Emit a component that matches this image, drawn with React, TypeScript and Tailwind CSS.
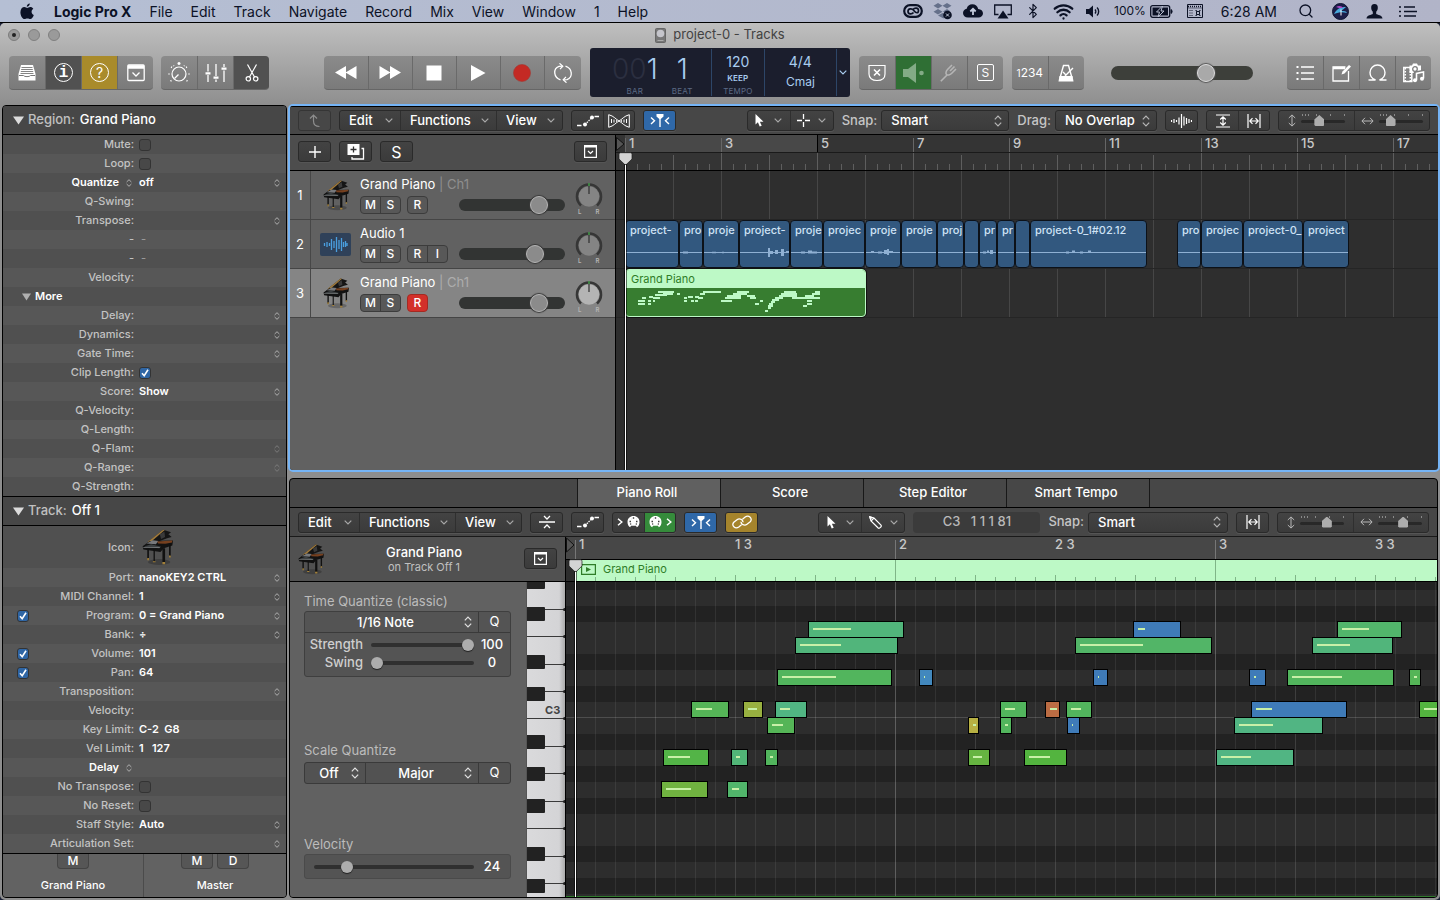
import React from "react";
import { Wifi, Bluetooth, Search } from "lucide-react";

type Kids = { children?: React.ReactNode };

/* ---------- shared class strings ---------- */
const darkBox = "rounded-[3px] border border-[#2a2a2a] bg-linear-to-b from-[#434343] to-[#3b3b3b] shadow-[0_1px_0_#555]";
const cell = "flex items-center justify-center";
const range = "m-0 block appearance-none bg-transparent [&::-webkit-slider-thumb]:appearance-none [&::-webkit-slider-runnable-track]:rounded-full";
const fader =
  range +
  " h-[18px] w-[106px] [&::-webkit-slider-runnable-track]:h-3 [&::-webkit-slider-runnable-track]:bg-[#323433] [&::-webkit-slider-thumb]:-mt-[3px] [&::-webkit-slider-thumb]:size-[18px] [&::-webkit-slider-thumb]:rounded-full [&::-webkit-slider-thumb]:border [&::-webkit-slider-thumb]:border-[#b5b5b5] [&::-webkit-slider-thumb]:bg-[#8b8b8b] [&::-webkit-slider-thumb]:shadow-[0_0_1px_1px_#3a3a3a]";
const master =
  range +
  " h-[18px] w-[142px] [&::-webkit-slider-runnable-track]:h-[14px] [&::-webkit-slider-runnable-track]:bg-[#3d3f3a] [&::-webkit-slider-thumb]:-mt-[2px] [&::-webkit-slider-thumb]:size-[18px] [&::-webkit-slider-thumb]:rounded-full [&::-webkit-slider-thumb]:border [&::-webkit-slider-thumb]:border-[#dedede] [&::-webkit-slider-thumb]:bg-[#a9a9a9] [&::-webkit-slider-thumb]:shadow-[0_0_1px_1px_#555]";
const mini =
  range +
  " h-[14px] [&::-webkit-slider-runnable-track]:h-1 [&::-webkit-slider-runnable-track]:bg-[#303030] [&::-webkit-slider-thumb]:-mt-1 [&::-webkit-slider-thumb]:size-3 [&::-webkit-slider-thumb]:rounded-full [&::-webkit-slider-thumb]:bg-[#adadad] [&::-webkit-slider-thumb]:shadow-[0_1px_1px_#222]";
const zoomer =
  range +
  " h-[11px] w-11 [&::-webkit-slider-runnable-track]:h-[3px] [&::-webkit-slider-runnable-track]:bg-[#282828] [&::-webkit-slider-thumb]:-mt-[5px] [&::-webkit-slider-thumb]:h-[11px] [&::-webkit-slider-thumb]:w-[10px] [&::-webkit-slider-thumb]:bg-[#adadad] [&::-webkit-slider-thumb]:[clip-path:polygon(50%_0,100%_42%,100%_90%,90%_100%,10%_100%,0_90%,0_42%)]";

/* ---------- icons ---------- */
type SvgProps = { w: number; h: number; children: React.ReactNode; className?: string; sw?: number; vb?: string };
const Svg = ({ w, h, children, className, sw = 1, vb }: SvgProps) => (
  <svg width={w} height={h} viewBox={vb ?? `0 0 ${w} ${h}`} fill="none" stroke="currentColor" strokeWidth={sw} className={"shrink-0 " + (className ?? "")} aria-hidden="true">
    {children}
  </svg>
);
const Chevron = ({ className = "text-[#a8a8a8]" }: { className?: string }) => (
  <Svg w={8} h={5} sw={1.2} className={className}><path d="M.7.7 4 4 7.3.7" /></Svg>
);
const UpDown = ({ className = "text-[#b5b5b5]" }: { className?: string }) => (
  <Svg w={8} h={12} sw={1.2} className={className}><path d="M.8 4.3 4 1l3.2 3.3M.8 7.7 4 11l3.2-3.3" /></Svg>
);
const SmallUpDown = ({ dim }: { dim?: boolean }) => (
  <Svg w={6} h={8} sw={1} className={dim ? "text-[#7c7c7c]" : "text-[#b0b0b0]"}><path d="M.6 3 3 .7 5.4 3M.6 5 3 7.3 5.4 5" /></Svg>
);
const Triangle = ({ className }: { className?: string }) => (
  <Svg w={11} h={9} className={className}><path d="M0 .5h11L5.500 8.500z" fill="currentColor" stroke="none" /></Svg>
);
const Flex = () => (
  <Svg w={20} h={13} sw={1.4}><path d="M1 3.500 4.500 6.800 1 10M19 3.500 15.500 6.800 19 10" /><path d="M6.500 0h7v2.500L10.700 5v8H9.300V5L6.500 2.500z" fill="currentColor" stroke="none" /></Svg>
);
const Automation = () => (
  <Svg w={22} h={12} sw={1.3}><path d="M0 10.500h4.500M17.500 1.500H22" /><path d="m8 9.500 7-7" strokeDasharray="1.500 1" /><circle cx="8" cy="9.500" r="2" fill="currentColor" stroke="none" /><circle cx="15" cy="2.500" r="2" fill="currentColor" stroke="none" /></Svg>
);
const Arrow = () => (
  <Svg w={9} h={13}><path d="M.5 0v10.500l2.400-2.200 1.800 4.300 2-.9-1.800-4H8.500z" fill="currentColor" stroke="none" /></Svg>
);
const Inspector = () => (
  <Svg w={13} h={13} sw={1.2}><path d="M.6.6h11.800v11.800H.6z" /><path d="M.6 1.500h11.800" strokeWidth="2" /><path d="m4 6 2.500 2.500L9 6" /></Svg>
);
const HFit = () => (
  <Svg w={14} h={14} sw={1.2}><path d="M1 0v14M13 0v14M3 7h8M5.500 4.200 2.800 7l2.700 2.800M8.500 4.200 11.200 7 8.500 9.800" /></Svg>
);
const VFit = () => (
  <Svg w={14} h={14} sw={1.2}><path d="M0 1h14M0 13h14M7 3v8M4.200 5.500 7 2.800l2.800 2.700M4.200 8.500 7 11.200l2.800-2.700" /></Svg>
);
const Palette = () => (
  <Svg w={13} h={12}><path d="M6.500 0C10 0 12.500 2.500 12.500 6c0 2.500-1 4.500-2.700 5.300L9 9.800H4L3.200 11.300C1.500 10.500.5 8.500.5 6 .5 2.500 3 0 6.500 0z" fill="currentColor" stroke="none" /><path d="M2.500 5.500h1.500M9 5.500h1.500M5.800 2h1.400M4 3h.1M9 3h.1M3.200 8h1M8.800 8h1" stroke="#3d3d3d" strokeWidth="1.300" /></Svg>
);
const Angle = () => <Svg w={6} h={8} sw={1.5}><path d="M1 .8 4.800 4 1 7.200" /></Svg>;

const PianoPic = ({ w, h }: { w: number; h: number }) => (
  <svg width={w} height={h} viewBox="0 0 94 112" className="shrink-0" role="img" aria-label="Grand piano">
    <ellipse cx="52" cy="100" rx="34" ry="9" fill="#000" opacity=".22" />
    <path d="M17 40 64 2l24 8-8 6 10 8-14 4-26 10z" fill="#151515" />
    <path d="M17 39 64 2l5 1-44 38z" fill="#a07a3c" />
    <path d="m54 16 14-8 2 16-12 6z" fill="#3a3a3a" />
    <path d="M2 52 24 36l70-1-2 15-26 8-10 12-52-8z" fill="#121212" />
    <path d="M14 44 32 34l18 2-8 10z" fill="#77797c" />
    <path d="m46 38 46-3-1 6-20 4-22-1z" fill="#76401f" />
    <path d="m8 52 20-6 30 8-6 4-44-4z" fill="#3c4042" />
    <path d="M4 56h50" stroke="#8e9192" strokeWidth="2" />
    <path d="M16 60h5v32h-5zM35 62h4v38h-4zM62 58h8v42h-8zM82 48h5v34h-5z" fill="#111" />
    <path d="M16 88h5v7h-5zM62 100h8v7h-8zM82 80h5v6h-5zM33 98h8v3h-8z" fill="#a38038" />
  </svg>
);
const WavePic = () => (
  <svg width="31" height="23" viewBox="0 0 31 23" className="shrink-0" role="img" aria-label="Audio waveform">
    <rect width="31" height="23" rx="2" fill="#2f4159" />
    <path d="M4.500 10v3M7 9v5M9.500 10v3M11.500 6v11M14 8v7M16.500 4v15M19 7v9M21.500 5v13M23.500 9v5M25.500 8v6M27 10v3" stroke="#4a9fe0" strokeWidth="1.300" />
  </svg>
);

/* ---------- menu bar ---------- */
const menus = ["File", "Edit", "Track", "Navigate", "Record", "Mix", "View", "Window", "1", "Help"];
const Tray = ({ children, wide }: Kids & { wide?: boolean }) => <span className={cell + (wide ? " w-[34px]" : " w-[30px]")}>{children}</span>;

function MenuBar() {
  return (
    <header className="flex h-[23px] items-center border-b border-black bg-linear-to-r from-[#b5bfd4] to-[#b1b4c8] text-[14px] text-[#0c1226]">
      <a href="#apple" aria-label="Apple menu" className="ml-5">
        <Svg w={14} h={17} vb="0 0 14 17"><path d="M9.800.5c.1 1.700-1.400 3.300-3 3.300C6.600 2.200 8.200.6 9.800.5zM7.200 4.900c.8 0 1.600-.8 3.100-.8 1.200 0 2.300.6 3 1.600-2.500 1.600-2.100 5.100.5 6.200-.6 1.900-2 4.200-3.500 4.200-1 0-1.500-.7-2.900-.7s-1.900.7-2.900.7C2.500 16.100.4 12.700.4 9.300c0-3.400 2-5.200 4-5.200 1.300 0 2.100.8 2.800.8z" fill="currentColor" stroke="none" /></Svg>
      </a>
      <nav className="ml-5 flex items-center gap-[18px]">
        <a href="#app" className="font-bold">Logic Pro X</a>
        {menus.map((m) => <a key={m} href={"#" + m}>{m}</a>)}
      </nav>
      <div className="ml-auto flex items-center pr-[15px]">
        <Tray>
          <Svg w={20} h={14} sw={2.200}><rect x="1.200" y="1.200" width="17.600" height="11.600" rx="5.800" /><path d="M10.500 8.500C9 10.500 5 10.500 5 7.500s4-3.500 6-.8 4.500 2.800 4.500-.2-4-3-5.500-1" strokeWidth="1.700" /></Svg>
        </Tray>
        <Tray>
          <Svg w={20} h={17}><path d="m5 0 4.500 2.700L5 5.500.5 2.700zM14 0l4.500 2.700L14 5.500 9.500 2.700zM5 6l4.500 2.700L5 11.500.5 8.700zM9.500 10l3 2-2 3.500L5 12.500zM14 6l3 2-5 1.500-2-1z" fill="#65708a" stroke="none" /><circle cx="14.500" cy="12" r="4.300" fill="currentColor" stroke="none" /><path d="m13 10.500 3 3m0-3-3 3" stroke="#c8d0e0" /></Svg>
        </Tray>
        <Tray>
          <Svg w={20} h={14}><path d="M5 13.500C2 13.500 0 11.500 0 9c0-2.200 1.600-4 3.700-4.300C4.300 2 6.500.3 9.300.3c3 0 5.300 2 5.900 4.700C18 5.100 20 6.900 20 9.300c0 2.400-2 4.200-4.500 4.200z" fill="currentColor" stroke="none" /><path d="M10 11V5M7.300 7.500 10 4.800l2.700 2.700" stroke="#c3cadb" strokeWidth="1.800" /></Svg>
        </Tray>
        <Tray>
          <Svg w={18} h={15} sw={1.3}><path d="M4.500 10.500H.7V1h16.600v9.500h-3.800" /><path d="m9 6.500 5.500 8h-11z" fill="currentColor" stroke="none" /></Svg>
        </Tray>
        <Tray><Bluetooth size={16} strokeWidth={1.8} /></Tray>
        <Tray><Wifi size={21} strokeWidth={2.6} /></Tray>
        <Tray>
          <Svg w={14} h={13} sw={1.4}><path d="M0 4h3l4-3.500v12L3 9H0z" fill="currentColor" stroke="none" /><path d="M9 4.500c1 1 1 3 0 4M11 2.500c2.200 2 2.200 6 0 8" /></Svg>
        </Tray>
        <span className="ml-[6px] text-[12px]">100%</span>
        <Svg w={23} h={13} className="ml-1"><rect x=".7" y=".7" width="19" height="11.600" rx="2" strokeWidth="1.300" /><path d="M21 4.500c1.500.5 1.500 3.500 0 4z" fill="currentColor" /><rect x="2.500" y="2.500" width="15.500" height="8" fill="currentColor" stroke="none" /><path d="m12.500 1-6 6h3L8 12l6-6h-3z" fill="currentColor" stroke="#b8bfd2" /></Svg>
        <Svg w={16} h={14} className="ml-[14px]"><path d="M.5.5h15v13H.5z" /><path d="M1 2.500h14" strokeWidth="1.500" strokeDasharray="1 1" /><path d="M.5 4h15M2.500 6.500h4M2.500 9h4M2.500 11.500h4" strokeDasharray="1 1" /><path d="M9.500 7.500h3v3h-3zM8.500 6.500h1v1M13.500 6.500h-1v1M8.500 11.500h1v-1M13.500 11.500h-1v-1" /></Svg>
        <span className="ml-[18px]">6:28 AM</span>
        <span className="ml-3 flex">
          <Tray wide><Search size={16} strokeWidth={2} /></Tray>
          <Tray wide>
            <Svg w={17} h={17}><circle cx="8.500" cy="8.500" r="8" fill="#1c1d49" stroke="#111633" /><path d="M2 11c3-6 7-7 12-7-2 2-4 3-5 4 3 0 5 0 6 2-4-1-8-1-13 1z" fill="#48a9dc" stroke="none" /><path d="M4 4c3-2 6-1 7 1-3 0-5 0-7-1z" fill="#b04bc4" stroke="none" /><path d="M9 6.500v6" stroke="#fff" /></Svg>
          </Tray>
          <Tray wide>
            <Svg w={17} h={15}><path d="M8.500 0c2.300 0 3.500 1.600 3.300 4-.1 1.700-.8 3-1.600 3.700v2.200c1 .9 6.300 1 6.300 4.600H.5c0-3.600 5.300-3.700 6.300-4.600V7.700C6 7 5.300 5.700 5.200 4 5 1.600 6.200 0 8.500 0z" fill="currentColor" stroke="none" /></Svg>
          </Tray>
          <Tray wide>
            <Svg w={18} h={11} sw={1.700}><path d="M0 1h2M5 1h11M0 5.500h2M5 5.500h13M0 10h2M5 10h12" /></Svg>
          </Tray>
        </span>
      </div>
    </header>
  );
}

/* ---------- control bar ---------- */
type TB = { label: string; icon: React.ReactNode; tone?: string; w?: string };
function Group({ items, className = "" }: { items: TB[]; className?: string }) {
  return (
    <div className={"flex h-[34px] overflow-hidden rounded-[4px] border-b border-[#666] bg-linear-to-b from-[#8b8b8b] to-[#7a7a7a] " + className}>
      {items.map((b, i) => (
        <button key={b.label} aria-label={b.label} className={`${cell} ${b.w ?? "w-9"} text-white ${i ? "border-l border-[#6a6a6a]" : ""} ${b.tone ?? ""}`}>
          {b.icon}
        </button>
      ))}
    </div>
  );
}
const ringed = "flex size-[19px] items-center justify-center rounded-full border border-white leading-none";
const views: TB[] = [
  { label: "Library", icon: <Svg w={18} h={18}><path d="M3 1h12l2.500 9v6.500H.5V10z" fill="currentColor" stroke="none" /><path d="M3.500 3.500h11M3.200 5.500h11.600M2.800 7.500h12.400M2.500 9.500h13" stroke="#777" strokeWidth=".9" /><path d="M1 11.500h4.500c.5 1.500 6.500 1.500 7 0H17" stroke="#777" /></Svg> },
  { label: "Inspector", tone: "bg-[#515151]", icon: <span className={ringed + " [font-family:'Liberation_Mono',monospace] text-[16px] font-bold"}>i</span> },
  { label: "Quick Help", tone: "bg-[#a98b2b]", icon: <span className={ringed + " text-[14px]"}>?</span> },
  { label: "Toolbar", icon: <Svg w={18} h={18} sw={1.300}><rect x=".8" y="1" width="16.400" height="15.500" rx="1" /><path d="M1 3h16" strokeWidth="3.500" /><path d="m5.500 8.500 3.500 3.500 3.500-3.500" /></Svg> },
];
const panels: TB[] = [
  { label: "Smart Controls", icon: <Svg w={22} h={22} sw={1.200}><circle cx="11" cy="12" r="7" /><path d="m6.500 16.500 4-4" /><path d="M11 0v3M9.500 1.500h3M.5 12h1M20.500 12h1M3 5l1 .5M19 5l-1 .5M2.500 19l1-.5M19.500 19l-1-.5M5.500 3.500l.5.5M16 4l.5-.5" strokeWidth="1.500" /></Svg> },
  { label: "Mixer", icon: <Svg w={22} h={18} sw={1.300}><path d="M3 0v7.500M3 11v7M11 0v12M11 15.500V18M19 0v3M19 6.500V18" /><path d="M.5 9.300h5M8.500 13.700h5M16.500 4.700h5" strokeWidth="2.200" /></Svg> },
  { label: "Editors", tone: "bg-[#515151]", icon: <Svg w={14} h={18} sw={1.200}><path d="M2.500.5 9.500 13M11.500.5 4.500 13" /><circle cx="3.300" cy="14.800" r="2.200" /><circle cx="10.700" cy="14.800" r="2.200" /></Svg> },
];
const transport: TB[] = [
  { label: "Rewind", w: "w-11", icon: <Svg w={22} h={13}><path d="M11 0v13L0 6.500zM21.500 0v13L10.500 6.500z" fill="currentColor" stroke="none" /></Svg> },
  { label: "Forward", w: "w-11", icon: <Svg w={22} h={13}><path d="M.5 0v13l11-6.500zM11 0v13l11-6.500z" fill="currentColor" stroke="none" /></Svg> },
  { label: "Stop", w: "w-11", icon: <Svg w={16} h={16}><path d="M.5.5h15v15H.5z" fill="currentColor" stroke="none" /></Svg> },
  { label: "Play", w: "w-11", icon: <Svg w={16} h={16}><path d="M1 0v16l14.500-8z" fill="currentColor" stroke="none" /></Svg> },
  { label: "Record", w: "w-11", icon: <Svg w={18} h={18}><circle cx="9" cy="9" r="8.500" fill="#c42a24" stroke="#a53531" strokeWidth=".6" /></Svg> },
  { label: "Cycle", w: "w-[37px]", icon: <Svg w={20} h={20} sw={1.300}><path d="M7.500 16.800C.5 14.500-.3 5.800 6 3.400l3.500-.2M12.500 3.200c7 2.300 7.800 11 1.500 13.400l-3.500.2" /><path d="m6.500.300 3.300 2.900L7 6.200M13.500 19.700l-3.300-2.900L13 13.800" strokeWidth="1.200" /></Svg> },
];
const modes: TB[] = [
  { label: "Replace", icon: <Svg w={18} h={18} sw={1.200}><path d="M1 1.500h16V10c0 4-3 6.500-8 6.500S1 14 1 10z" /><path d="m6 5.500 6 6m0-6-6 6" strokeWidth="1.600" /></Svg> },
  { label: "Input monitor", tone: "bg-[#2f6f34]", icon: <Svg w={22} h={20} className="text-[#83ab86]"><path d="M1 6h5l8-6v20l-8-6H1z" fill="currentColor" stroke="none" /><circle cx="19.500" cy="10" r="2.300" fill="currentColor" stroke="none" /></Svg> },
  { label: "Tuner", icon: <Svg w={18} h={18} sw={1.600} className="text-[#b5b5b5]"><path d="m.8 17.200 6-6M12 1 7.500 5.500c-1.500 1.500-2 4-1 5s3.500.5 5-1L16 5M14.500 2.500 10 7" /></Svg> },
  { label: "Solo", icon: <span className="flex size-[17px] items-center justify-center rounded-[2px] border border-white text-[12px]">S</span> },
];
const clicks: TB[] = [
  { label: "Count in", icon: <span className="text-[12px]"><span className="text-[10px]">1</span>234</span> },
  { label: "Metronome", icon: <Svg w={16} h={18} sw={1.400}><path d="M2 14 5.500 1.500h5L14 14" /><path d="M1.500 12h13l1 5.500H.5z" fill="currentColor" stroke="none" /><path d="m7 12 8-8M5 8l3 3" /></Svg> },
];
const browsers: TB[] = [
  { label: "List Editors", icon: <Svg w={18} h={16} sw={1.300}><path d="M5 2h13M5 8h13M5 14h13" /><path d="M.5 2h2M.5 8h2M.5 14h2" strokeWidth="2" /></Svg> },
  { label: "Note Pad", icon: <Svg w={20} h={18} sw={1.300}><path d="M13.500 3H1v14h15.500V7" /><path d="M1 4h12" strokeWidth="2.500" /><path d="m9.500 10.500 1-3L17 1l2 1.500L12.500 9.500z" fill="currentColor" stroke="none" /></Svg> },
  { label: "Loop Browser", icon: <Svg w={19} h={17} sw={1.400}><path d="M.5 16h7C3.500 14.500 2 11.500 2 8.500a7.500 7.500 0 0 1 15 0c0 3-1.500 6-5.500 7.500h7" /></Svg> },
  { label: "Browsers", icon: <Svg w={22} h={20}><path d="M.8 4.500h8v14h-8z" strokeWidth="1.500" /><path d="M2.300 5v13M7.300 5v13" strokeDasharray="1.500 1.500" strokeWidth="1.500" /><path d="M6.500 2.500h2.500L10 .5h4l1 2h3v7.500H6.500z" fill="currentColor" stroke="none" /><circle cx="12" cy="6" r="2.300" stroke="#7d7d7d" strokeWidth="1.300" /><path d="M12.500 17v-7l8-1.500v7" stroke="#7d7d7d" strokeWidth="3.500" /><path d="M13.500 17v-6.500l7-1.500v6.500" strokeWidth="1.600" /><circle cx="12" cy="17.300" r="2" fill="currentColor" stroke="none" /><circle cx="19" cy="15.800" r="2" fill="currentColor" stroke="none" /></Svg> },
];

function Lcd() {
  const tag = "text-[8px] leading-[10px] tracking-wide";
  return (
    <div className="ml-[9px] flex h-[49px] rounded-[3px] bg-[#1b1e2d] text-[#a9cdf0]">
      <div className="flex w-[121px] gap-[12px] pt-[4px] pl-[20px]">
        <div className="flex w-[50px] flex-col items-center">
          <div className="flex h-[34px] items-center text-[28px] font-light"><span className="text-[#2b2f40]">00</span>1</div>
          <span className={tag + " text-[#5b6a85]"}>BAR</span>
        </div>
        <div className="flex flex-col items-center">
          <div className="flex h-[34px] items-center text-[28px] font-light">1</div>
          <span className={tag + " text-[#5b6a85]"}>BEAT</span>
        </div>
      </div>
      <div className="my-[1px] flex w-[53px] flex-col items-center border-l border-[#2d4668] pt-1">
        <span className="text-[14px] leading-[18px]">120</span>
        <span className={tag + " mt-[2px] font-semibold"}>KEEP</span>
        <span className={tag + " mt-[3px] text-[#5b6a85]"}>TEMPO</span>
      </div>
      <div className="my-[1px] flex w-[72px] flex-col items-center border-l border-[#2d4668] pt-1">
        <span className="text-[14px] leading-[18px]">4/4</span>
        <span className="mt-[3px] text-[12px] leading-[16px]">Cmaj</span>
      </div>
      <button aria-label="Display mode" className={cell + " my-[1px] w-[14px] border-l border-[#2d4668]"}><Chevron className="text-[#a9cdf0]" /></button>
    </div>
  );
}

function ControlBar() {
  return (
    <div className="bg-linear-to-b from-[#bfbfbf] to-[#8f8f8f]">
      <div className="flex h-6 items-center px-2">
        <div className="flex gap-2">
          <button aria-label="Close" className={cell + " size-3 rounded-full border border-[#7c7c7c] bg-[#999]"}><span className="size-1 rounded-full bg-[#222]" /></button>
          <button aria-label="Minimize" className="size-3 rounded-full border border-[#808080] bg-[#9a9a9a]" />
          <button aria-label="Zoom" className="size-3 rounded-full border border-[#808080] bg-[#9a9a9a]" />
        </div>
        <h1 className="mr-[52px] flex flex-1 items-center justify-center gap-[7px] text-[13px] text-[#424242]">
          <Svg w={11} h={15}><rect x=".5" y=".5" width="10" height="14" rx="1" fill="#777" stroke="#666" /><circle cx="5.500" cy="5.500" r="3.800" fill="#c5c5cb" stroke="none" /><path d="M2.500 12.500h6" stroke="#aaa" /></Svg>
          project-0 - Tracks
        </h1>
      </div>
      <div className="flex h-[57px] items-start px-[9px] pt-[1px]">
        <Group items={views} className="mt-2" />
        <Group items={panels} className="mt-2 ml-2" />
        <div className="grow-52" />
        <Group items={transport} className="mt-2" />
        <Lcd />
        <Group items={modes} className="mt-2 ml-[9px]" />
        <Group items={clicks} className="mt-2 ml-[9px]" />
        <div className="grow-26" />
        <input type="range" aria-label="Master volume" defaultValue={69} className={master + " mt-4"} />
        <div className="grow-32" />
        <Group items={browsers} className="mt-2" />
      </div>
    </div>
  );
}

/* ---------- inspector ---------- */
type Row = { label: string; value?: string; check?: boolean; step?: boolean | "dim"; lead?: boolean; strong?: boolean };
const regionRows: Row[] = [
  { label: "Mute:", check: false }, { label: "Loop:", check: false }, { label: "Quantize", value: "off", step: true, strong: true },
  { label: "Q-Swing:" }, { label: "Transpose:", step: true }, { label: "-", value: "-" }, { label: "-", value: "-" }, { label: "Velocity:" },
];
const moreRows: Row[] = [
  { label: "Delay:", step: true }, { label: "Dynamics:", step: true }, { label: "Gate Time:", step: true }, { label: "Clip Length:", check: true },
  { label: "Score:", value: "Show", step: true }, { label: "Q-Velocity:" }, { label: "Q-Length:" }, { label: "Q-Flam:", step: "dim" },
  { label: "Q-Range:", step: "dim" }, { label: "Q-Strength:" },
];
const trackRows: Row[] = [
  { label: "Port:", value: "nanoKEY2 CTRL", step: true }, { label: "MIDI Channel:", value: "1", step: true },
  { label: "Program:", value: "0 = Grand Piano", step: true, lead: true }, { label: "Bank:", value: "÷", step: true },
  { label: "Volume:", value: "101", lead: true }, { label: "Pan:", value: "64", lead: true }, { label: "Transposition:", step: true },
  { label: "Velocity:" }, { label: "Key Limit:", value: "C-2  G8" }, { label: "Vel Limit:", value: "1   127" }, { label: "Delay", strong: true },
  { label: "No Transpose:", check: false }, { label: "No Reset:", check: false }, { label: "Staff Style:", value: "Auto", step: true },
  { label: "Articulation Set:", step: true },
];

const Check = ({ id, on }: { id: string; on: boolean }) => (
  <span className="relative flex">
    <input id={id} type="checkbox" defaultChecked={on} className="size-3 appearance-none rounded-[3px] border border-[#333] bg-[#484848] checked:bg-[#2f66a5]" />
    {on && <svg className="pointer-events-none absolute inset-0" width="12" height="12" viewBox="0 0 12 12" fill="none" stroke="#fff" strokeWidth="1.600"><path d="m3 6.200 2.200 2.500L9 2.800" /></svg>}
  </span>
);

function Field({ row, group, index }: { row: Row; group: string; index: number }) {
  const id = `${group}-${index}`;
  return (
    <div className="flex h-[19px] items-center even:bg-[#575757]">
      <div className="flex w-[131px] items-center">
        {row.lead && <span className="ml-[14px]"><Check id={id} on /></span>}
        {row.strong ? (
          <span className="ml-auto flex items-center gap-[7px] pr-[2px] font-semibold text-white">{row.label}<SmallUpDown /></span>
        ) : row.lead || row.check !== undefined ? (
          <label htmlFor={id} className="ml-auto">{row.label}</label>
        ) : (
          <span className="ml-auto">{row.label}</span>
        )}
      </div>
      <div className="ml-[5px] flex flex-1 items-center">
        {row.check !== undefined && <Check id={id} on={row.check} />}
        {row.value && <span className={row.value === "-" ? "pl-[2px] text-[#999]" : "font-semibold whitespace-pre text-white"}>{row.value}</span>}
      </div>
      {row.step && <button aria-label={"Change " + row.label} className="mr-[6px]"><SmallUpDown dim={row.step === "dim"} /></button>}
    </div>
  );
}

const SectionHead = ({ label, value }: { label: string; value: string }) => (
  <h2 className="flex h-[29px] items-center border-b border-black bg-[#474747] pl-[10px] text-[13px]">
    <Triangle className="mr-1 text-[#dcdcdc]" />
    <span className="text-[#c0c0c0]">{label}</span>
    <span className="ml-[5px] font-medium text-white">{value}</span>
  </h2>
);

const StripButton = ({ children }: Kids) => (
  <button className="h-[15px] w-8 rounded-b-[4px] border border-t-0 border-[#444] bg-[#565656] text-[12px] leading-none font-medium text-white">{children}</button>
);

function InspectorPanel() {
  return (
    <aside className="mt-[1px] flex w-[285px] shrink-0 flex-col overflow-hidden rounded-[4px] border border-black bg-[#505050] text-[11px] font-medium text-[#c3c3c3]">
      <SectionHead label="Region:" value="Grand Piano" />
      <div>{regionRows.map((r, i) => <Field key={i} row={r} group="region" index={i} />)}</div>
      <div className="flex h-[19px] items-center pl-[19px] font-semibold text-white"><Svg w={9} h={8} className="mr-1 text-[#b0b0b0]"><path d="M0 .5h9L4.500 7.500z" fill="currentColor" stroke="none" /></Svg>More</div>
      <div className="[&>div]:bg-[#575757] [&>div:nth-child(even)]:bg-[#505050]">{moreRows.map((r, i) => <Field key={i} row={r} group="more" index={i} />)}</div>
      <div className="border-t border-black"><SectionHead label="Track:" value="Off 1" /></div>
      <div className="flex h-[42px] items-center">
        <span className="w-[131px] text-right">Icon:</span>
        <span className="ml-2"><PianoPic w={31} h={37} /></span>
      </div>
      <div className="[&>div]:bg-[#575757] [&>div:nth-child(even)]:bg-[#505050]">{trackRows.map((r, i) => <Field key={i} row={r} group="track" index={i} />)}</div>
      <div className="flex flex-1 border-t border-black bg-[#626262] text-[11px] text-white">
        <div className="flex w-[141px] flex-col items-center gap-[8px] border-r border-[#4b4b4b]">
          <StripButton>M</StripButton>
          <span>Grand Piano</span>
        </div>
        <div className="flex flex-1 flex-col items-center gap-[8px]">
          <div className="flex gap-1"><StripButton>M</StripButton><StripButton>D</StripButton></div>
          <span>Master</span>
        </div>
      </div>
    </aside>
  );
}

/* ---------- panel toolbar pieces ---------- */
function MenuGroup() {
  const items: [string, string][] = [["Edit", "w-[60px]"], ["Functions", "w-24"], ["View", "w-[66px]"]];
  return (
    <div className={darkBox + " flex h-[21px]"}>
      {items.map(([t, w], i) => (
        <button key={t} className={`${w} flex items-center justify-between pr-[7px] pl-[9px] text-[13px] leading-none font-medium text-white ${i ? "border-l border-[#2f2f2f]" : ""}`}>
          {t}<Chevron />
        </button>
      ))}
    </div>
  );
}
type IB = { label: string; icon: React.ReactNode; w?: string; tone?: string };
const IconGroup = ({ items }: { items: IB[] }) => (
  <div className={darkBox + " flex h-[21px] overflow-hidden"}>
    {items.map((b, i) => (
      <button key={b.label} aria-label={b.label} className={`${cell} ${b.w ?? "w-[31px]"} gap-1 text-white ${i ? "border-l border-[#2f2f2f]" : ""} ${b.tone ?? ""}`}>{b.icon}</button>
    ))}
  </div>
);
function Pick({ id, label, value, width }: { id: string; label: string; value: string; width: string }) {
  return (
    <div className="flex items-center">
      <label htmlFor={id} className="mr-1 text-[13px] font-medium text-[#c6c6c6]">{label}</label>
      <div className={`${darkBox} relative flex h-[21px] items-center ${width}`}>
        <select id={id} className="h-full w-full appearance-none pl-[9px] text-[13px] leading-none font-medium text-white"><option>{value}</option></select>
        <span className="pointer-events-none absolute right-[6px]"><UpDown /></span>
      </div>
    </div>
  );
}
const ZoomCell = ({ label, value, vertical }: { label: string; value: number; vertical?: boolean }) => (
  <div className={`flex flex-1 items-center justify-center gap-[5px] ${vertical ? "border-r border-[#2f2f2f]" : ""}`}>
    {vertical ? (
      <Svg w={8} h={13} className="text-[#b8b8b8]"><path d="M4 1v11M.8 4 4 .9 7.200 4M.8 9 4 12.100 7.200 9" /></Svg>
    ) : (
      <Svg w={13} h={8} className="text-[#b8b8b8]"><path d="M1 4h11M4 .8.9 4 4 7.200M9 .8 12.100 4 9 7.200" /></Svg>
    )}
    <div className="flex flex-col">
      <Svg w={44} h={2} className="text-[#8a8a8a]"><path d="M1.500 0v2M4.500 0v2M7.500 0v2M15.500 0v2M29.500 0v2M43.500 0v2" /></Svg>
      <input type="range" aria-label={label} defaultValue={value} className={zoomer} />
    </div>
  </div>
);
const ZoomGroup = ({ v, h }: { v: number; h: number }) => (
  <div className={darkBox + " flex h-[21px] w-[152px]"}>
    <ZoomCell label="Vertical zoom" value={v} vertical />
    <ZoomCell label="Horizontal zoom" value={h} />
  </div>
);

const Playhead = ({ top }: { top: string }) => (
  <div className={`pointer-events-none absolute bottom-0 left-[2px] z-20 flex flex-col items-center ${top}`}>
    <Svg w={15} h={14}><path d="M1 2.500C1 1 2 .7 3 .7h9c1 0 2 .3 2 1.800V7l-6.500 6.300L1 7z" fill="#d4d4d4" stroke="#1d1d1d" strokeWidth=".7" /></Svg>
    <div className="-mt-[1px] w-px flex-1 bg-white shadow-[0_0_0_1px_rgba(0,0,0,0.55)]" />
  </div>
);

/* ---------- tracks ---------- */
type Track = { n: number; name: string; ch?: string; vol: number; input?: boolean; armed?: boolean };
const tracks: Track[] = [
  { n: 1, name: "Grand Piano", ch: "Ch1", vol: 81 },
  { n: 2, name: "Audio 1", vol: 76, input: true },
  { n: 3, name: "Grand Piano", ch: "Ch1", vol: 81, armed: true },
];
const Mini = ({ items, armed, track }: { items: string[]; armed?: boolean; track: string }) => (
  <div className={`flex h-[18px] overflow-hidden rounded-[4px] border ${armed ? "border-[#a42a22] bg-[#d3302a]" : "border-[#3c3c3c] bg-[#585858]"}`}>
    {items.map((t, i) => (
      <button key={t} aria-label={`${t} ${track}`} className={`text-[12px] leading-none font-medium text-white ${i ? "w-5 border-l border-[#3c3c3c]" : "w-[19px]"}`}>{t}</button>
    ))}
  </div>
);
const PanKnob = ({ bright }: { bright?: boolean }) => (
  <svg width="28" height="34" viewBox="0 0 28 34" className="shrink-0" role="img" aria-label="Pan centre">
    <path d="M6 24.500a12 12 0 1 1 16 0" fill="none" stroke="#363636" strokeWidth="2.600" />
    <circle cx="14" cy="15.500" r="10.300" fill={bright ? "#b4b4b4" : "#848484"} />
    <path d="M14 5v8" stroke="#2e2e2e" strokeWidth="1.200" />
    <path d="M14 2v3" stroke="#43b04b" strokeWidth="1.200" />
    <text x="3" y="32.500" fontSize="6" fontWeight="600" fill="#b5b5b5">L</text>
    <text x="20.500" y="32.500" fontSize="6" fontWeight="600" fill="#b5b5b5">R</text>
  </svg>
);
function TrackHeader({ t }: { t: Track }) {
  return (
    <div className={`flex h-[49px] border-b border-[#454545] text-white ${t.armed ? "bg-[#858585]" : "bg-[#616161]"}`}>
      <div className={cell + " w-[21px] border-r border-[#474747] pt-[2px] text-[13px]"}>{t.n}</div>
      <div className={cell + " w-[49px]"}>{t.input ? <WavePic /> : <PianoPic w={26} h={31} />}</div>
      <div className="flex w-[99px] flex-col gap-[3px] pt-[5px]">
        <div className="text-[13px] leading-[17px] whitespace-nowrap">
          {t.name}{t.ch && <span className={t.armed ? "text-[#adadad]" : "text-[#8f8f8f]"}> | {t.ch}</span>}
        </div>
        <div className="flex gap-[6px]">
          <Mini items={["M", "S"]} track={t.name + " " + t.n} />
          <Mini items={t.input ? ["R", "I"] : ["R"]} armed={t.armed} track={t.name + " " + t.n} />
        </div>
      </div>
      <input type="range" aria-label={`Volume ${t.name} ${t.n}`} defaultValue={t.vol} className={fader + " mt-[25px]"} />
      <div className="ml-[10px] pt-[10px]"><PanKnob bright={t.armed} /></div>
    </div>
  );
}

type Clip = { x: number; w: number; name: string; wave?: string };
const clips: Clip[] = [
  { x: 626, w: 54, name: "project-" }, { x: 680, w: 24, name: "pro", wave: "M3 .5h5v2H3z" },
  { x: 704, w: 36, name: "proje", wave: "M8 .8h4v1.500H8zM18 .8h2v1.500h-2z" },
  { x: 740, w: 51, name: "project-", wave: "M28-3h2v9h-2zM30 0h3v3h-3zM35-1h3v4h-3zM41-2h3v7h-3zM46 0h3v2h-3z" },
  { x: 791, w: 33, name: "proje", wave: "M10 .5h4v2h-4zM17-.5h4v3h-4zM21 .5h5v2h-5z" }, { x: 824, w: 42, name: "projec" },
  { x: 866, w: 36, name: "proje", wave: "M5 0h3v2H5zM12 .5h4v2h-4zM18-1h3v4h-3zM21-2h2v6h-2zM23 0h4v2h-4z" },
  { x: 902, w: 36, name: "proje" }, { x: 938, w: 27, name: "proj" }, { x: 965, w: 15, name: "" },
  { x: 980, w: 18, name: "pr", wave: "M3 .5h3v2H3zM7-.5h2v2H7zM10-1h3v4h-3z" }, { x: 998, w: 18, name: "pr" }, { x: 1016, w: 15, name: "" },
  { x: 1031, w: 117, name: "project-0_1#02.12", wave: "M35 .5h3v2h-3zM41-.5h3v2h-3zM49 .5h3v2h-3zM57-.5h3v2h-3z" },
  { x: 1178, w: 24, name: "pro" }, { x: 1202, w: 42, name: "projec" }, { x: 1244, w: 60, name: "project-0_" }, { x: 1304, w: 46, name: "project" },
];
const timelineStart = 617;

const miniNotes: [number, number, number][] = [
  [54, 246, 20], [54, 256, 20], [66, 238, 12], [86, 234, 14], [70, 246, 6], [84, 246, 8], [84, 256, 10], [100, 238, 20], [98, 246, 8], [106, 228, 36], [114, 220, 47], [130, 226, 28], [171, 226, 9],
  [192, 238, 8], [192, 246, 8], [205, 234, 14], [213, 246, 10], [226, 234, 10], [226, 246, 8], [240, 226, 14], [248, 220, 54], [234, 238, 16],
  [303, 246, 32], [314, 238, 50], [322, 232, 40], [338, 226, 44], [350, 220, 36], [382, 232, 22], [390, 238, 18], [404, 256, 12], [420, 246, 8],
  [436, 276, 8], [444, 268, 10], [444, 262, 16], [448, 256, 12], [452, 248, 14], [456, 242, 20], [464, 236, 26], [476, 230, 56], [484, 226, 46], [492, 220, 36], [516, 236, 30], [544, 238, 56], [556, 232, 26], [560, 246, 16], [550, 262, 10], [562, 254, 14], [576, 226, 24], [586, 220, 14],
];

function TracksPanel() {
  return (
    <section aria-label="Tracks" className="flex flex-1 flex-col overflow-hidden rounded-[5px] border-2 border-[#75b4f6] bg-[#2e2e2e]">
      <div className="flex h-[29px] items-center gap-2 border-t border-b border-black bg-[#474747] px-2">
        <button aria-label="Hierarchy up" className={cell + " h-[21px] w-[33px] rounded-[3px] border border-[#353535] bg-[#474747] text-[#8d8d8d]"}>
          <Svg w={12} h={14} sw={1.200}><path d="M1 4.500 4.500 1 8 4.500M4.500 1v6c0 3.500 2 5.500 6 5.500" /></Svg>
        </button>
        <MenuGroup />
        <IconGroup items={[
          { label: "Automation", icon: <Automation /> },
          { label: "Flex", icon: <Svg w={22} h={14}><path d="M.7.700v12.600C6 12 8 8.500 11 7s5-5 10.300-6.300v12.600C16 12 14 8.500 11 7S6 2 .7.700z" /><path d="M3.500 5v4M6 5.500v3M8.500 6.200v1.600M13.500 6.200v1.600M16 5.500v3M18.500 5v4" /></Svg> },
        ]} />
        <IconGroup items={[{ label: "Catch playhead", icon: <Flex />, tone: "bg-[#2f68a8]" }]} />
        <div className="flex-1" />
        <IconGroup items={[
          { label: "Pointer tool", w: "w-[42px]", icon: <span className="flex items-center gap-[10px]"><Arrow /><Chevron /></span> },
          { label: "Marquee tool", w: "w-[43px]", icon: <span className="flex items-center gap-2"><Svg w={13} h={13} sw={1.300}><path d="M6.500 0v5M6.500 8v5M0 6.500h5M8 6.500h5" /></Svg><Chevron /></span> },
        ]} />
        <Pick id="snap-tracks" label="Snap:" value="Smart" width="w-32" />
        <Pick id="drag-tracks" label="Drag:" value="No Overlap" width="w-[102px]" />
        <IconGroup items={[{ label: "Waveform zoom", icon: <Svg w={21} h={14} sw={1.200}><path d="M.5 6v2M3 5v4M5.500 6v2M8 3.500v7M10.500 0v14M13 2.500v9M15.500 4v6M18 5v4M20.500 6v2" /></Svg> }]} />
        <IconGroup items={[{ label: "Fit vertically", icon: <VFit /> }, { label: "Fit horizontally", icon: <HFit /> }]} />
        <ZoomGroup v={40} h={20} />
      </div>
      <div className="flex flex-1">
        <div className="flex w-[326px] shrink-0 flex-col border-r border-black bg-[#616161]">
          <div className="flex h-9 items-center gap-2 border-b border-black bg-[#4d4d4d] px-2 pb-[2px] text-white">
            <button aria-label="Add track" className={darkBox + " h-[21px] w-[33px] " + cell}><Svg w={12} h={12} sw={1.400}><path d="M6 0v12M0 6h12" /></Svg></button>
            <button aria-label="Duplicate track" className={darkBox + " h-[21px] w-[33px] " + cell}>
              <Svg w={18} h={16} sw={1.300}><path d="M.5 0h12v11H.5z" fill="currentColor" stroke="none" /><path d="M6.500 2.500v6M3.500 5.500h6" stroke="#333" /><path d="M14.500 4.500h2v10.500H5v-2" /></Svg>
            </button>
            <button aria-label="Global solo" className={darkBox + " h-[21px] w-[33px] text-[16px] leading-none " + cell}>S</button>
            <button aria-label="Track header options" className={darkBox + " ml-auto h-[21px] w-[33px] " + cell}><Inspector /></button>
          </div>
          {tracks.map((t) => <TrackHeader key={t.n} t={t} />)}
        </div>
        <div className="relative flex min-w-0 flex-1 flex-col">
          <div className="flex h-9 flex-col border-b border-black bg-[#343434]">
            <div className="flex h-[18px] overflow-hidden border-b border-[#1a1a1a]">
              <div className="flex w-[9px] shrink-0 items-center"><Svg w={9} h={14}><path d="M.5.500 8 7 .5 13.500z" fill="#555" stroke="#111" /></Svg></div>
              {[1, 3, 5, 7, 9, 11, 13, 15, 17].map((n) => (
                <div key={n} className={`flex w-24 shrink-0 gap-[3px] text-[13px] leading-[16px] font-medium text-[#c9c9c9] ${n < 5 ? "bg-[#484848]" : ""}`}>
                  <span className={`w-px ${n === 5 ? "bg-black" : "mt-[3px] bg-[#666]"}`} />{n}
                </div>
              ))}
            </div>
            <div className="h-[17px] bg-[linear-gradient(to_right,#5e5e5e_1px,transparent_1px),linear-gradient(to_right,#5e5e5e_1px,transparent_1px),linear-gradient(to_right,#5e5e5e_1px,transparent_1px)] bg-repeat-x [background-position:9px_11px,9px_2px,9px_0] [background-size:12px_6px,48px_15px,96px_17px]" />
          </div>
          <div className="relative flex flex-col overflow-hidden bg-[linear-gradient(to_right,#464646_1px,transparent_1px)] [background-position:9px_0] [background-size:48px_100%]">
            {tracks.map((t) => <div key={t.n} className="h-[49px] border-b border-[#252525]" />)}
            {clips.map((c) => (
              <div key={c.x} style={{ left: c.x - timelineStart, width: c.w }} className="absolute top-[49px] h-12 rounded-[4px] border border-[#0c1118] bg-[#32587f]">
                <div className="mt-[2px] ml-1 h-[15px] text-[11px] leading-[15px] font-medium whitespace-nowrap text-[#cfe2f5]">{c.name}</div>
                <svg width="100%" height="14" className="mt-[7px] block"><g transform="translate(0 6)"><path d={`M0 1h${c.w}v1H0z`} fill="#8fb0d3" />{c.wave && <path d={c.wave} fill="#8fb0d3" />}</g></svg>
              </div>
            ))}
            <div className="absolute top-[98px] left-[9px] h-12 w-[241px] overflow-hidden rounded-[4px] border border-[#bdf9c6] bg-[#377d30] shadow-[0_0_0_1px_#111]">
              <div className="h-[18px] bg-[#bdf9c6] pl-[5px] text-[11px] leading-[18px] text-[#2f7d28]">Grand Piano</div>
              <svg width="239" height="27" viewBox="18 210 717 81" className="block" shapeRendering="crispEdges">
                {miniNotes.map(([x, y, w], i) => <rect key={i} x={x} y={y} width={w} height="6" fill="#bdf9c6" />)}
              </svg>
            </div>
          </div>
          <Playhead top="top-[17px]" />
        </div>
      </div>
    </section>
  );
}

/* ---------- piano roll ---------- */
const G = "#52b55d", T = "#51b583", B = "#3f7bb8", L = "#53b43f";
type Note = [x: number, y: number, w: number, line: number, color: string];
const notes: Note[] = [
  [808, 621, 96, 38, "#51b57b"], [795, 637, 103, 41, "#51b57b"], [777, 669, 115, 54, G], [919, 669, 14, 1, "#4288bd"],
  [691, 701, 38, 16, "#55b557"], [743, 701, 20, 9, "#98b040"], [775, 701, 32, 10, T], [767, 717, 28, 11, "#55b557"],
  [663, 749, 46, 22, "#53b447"], [731, 749, 17, 4, "#51b577"], [765, 749, 13, 3, G], [661, 781, 47, 25, "#70b340"], [727, 781, 21, 7, "#51b56b"],
  [1133, 621, 48, 7, B], [1075, 637, 137, 63, "#52b567"], [1093, 669, 15, 1, B], [1000, 701, 27, 10, G], [1045, 701, 15, 7, "#bb6c43"],
  [1066, 701, 26, 10, G], [968, 717, 11, 3, "#b7b043"], [1000, 717, 12, 3, G], [1067, 717, 13, 1, B], [968, 749, 22, 9, "#66b441"],
  [1024, 749, 43, 21, L], [1337, 621, 65, 27, "#52b56b"], [1312, 637, 81, 33, "#51b57b"], [1249, 669, 17, 2, B], [1287, 669, 107, 50, G],
  [1409, 669, 12, 3, "#55b557"], [1251, 701, 96, 16, B], [1234, 717, 89, 34, T], [1216, 749, 78, 30, T], [1419, 701, 60, 30, L],
];
const rows = ["h-2 d", "l", "d", "l", "l", "d", "l", "d", "c", "l", "d", "l", "d", "l", "d", "l", "l", "d", "l", "d", "h-[3px] l"];
const rowTone: Record<string, string> = {
  "h-2 d": "h-2 bg-[#222]",
  d: "h-4 bg-[#222]",
  l: "h-4 bg-[#2d2d2d]",
  c: "h-4 border-b border-[#4d4d4d] bg-[#2d2d2d]",
  "h-[3px] l": "h-[3px] bg-[#2d2d2d]",
};
const whiteLines = [609, 636, 664, 691, 718, 746, 773, 801, 828, 856, 883];
const blackKeys = [575, 607, 655, 687, 735, 767, 799, 847, 879];

function Keyboard() {
  return (
    <svg width="39" height="315" viewBox="0 582 39 315" className="block shrink-0" role="img" aria-label="Keyboard">
      <defs><linearGradient id="ivory"><stop offset="0" stopColor="#dadadc" /><stop offset=".85" stopColor="#d4d4d6" /><stop offset="1" stopColor="#aaa" /></linearGradient></defs>
      <rect y="582" width="39" height="315" fill="url(#ivory)" />
      {whiteLines.map((y) => <g key={y}><path d={`M0 ${y + 0.5}h39`} stroke="#3a3a3a" /><circle cx="38.500" cy={y + 0.5} r="1.500" fill="#222" /></g>)}
      {blackKeys.map((y) => <rect key={y} y={y} width="19" height="14" rx="1" fill="#222" />)}
      <path d="M.5 582v315" stroke="#555" />
      <text x="19" y="714" fontSize="11" fontWeight="700" fill="#444" fontFamily="Inter">C3</text>
    </svg>
  );
}

const SoftPick = ({ label, value, width }: { label: string; value: string; width: string }) => (
  <div className={`relative flex h-5 items-center border-r border-[#3a3a3a] ${width}`}>
    <select aria-label={label} className="h-full w-full appearance-none pr-3 text-[13px] leading-none font-medium text-white [text-align-last:center]"><option>{value}</option></select>
    <span className="pointer-events-none absolute right-[6px]"><UpDown className="text-[#e0e0e0]" /></span>
  </div>
);
const QButton = () => <button aria-label="Quantize now" className={cell + " h-5 flex-1 text-[13px] text-white"}>Q</button>;
const soft = "rounded-[3px] border border-[#3a3a3a] bg-[#525252]";

function EditorSide() {
  return (
    <div className="flex w-[236px] flex-col bg-[#616161] pt-[10px] pr-[15px] pl-[14px] text-[13px] text-[#bcbcbc]">
      <h3 className="h-[19px] leading-[19px]">Time Quantize (classic)</h3>
      <div className="rounded-[3px] border border-[#3f3f3f] bg-[#545454]">
        <div className="flex border-b border-[#3a3a3a]"><SoftPick label="Quantize value" value="1/16 Note" width="w-[174px]" /><QButton /></div>
        <div className="flex flex-col pt-[3px] pb-1 pl-1 font-medium">
          {[{ n: "Strength", v: 100 }, { n: "Swing", v: 0 }].map((s) => (
            <div key={s.n} className="flex h-[18px] items-center">
              <label htmlFor={s.n} className="w-[54px] text-right text-[#cfcfcf]">{s.n}</label>
              <input id={s.n} type="range" defaultValue={s.v} className={mini + " ml-2 w-[103px]"} />
              <output className="flex-1 text-center text-white">{s.v}</output>
            </div>
          ))}
        </div>
      </div>
      <h3 className="mt-16 h-[19px] leading-[19px]">Scale Quantize</h3>
      <div className={soft + " mt-[2px] flex"}>
        <SoftPick label="Scale quantize" value="Off" width="w-[61px]" />
        <SoftPick label="Scale" value="Major" width="w-[113px]" />
        <QButton />
      </div>
      <label htmlFor="velocity" className="mt-[51px] h-[19px] leading-[19px]">Velocity</label>
      <div className="flex h-[25px] items-center rounded-[3px] border border-[#4a4a4a] bg-[#545454] pl-[9px]">
        <input id="velocity" type="range" min={1} max={127} defaultValue={24} className={mini + " w-40"} />
        <output className="flex-1 text-center font-medium text-white">24</output>
      </div>
    </div>
  );
}

function EditorPanel() {
  const tabs = ["Piano Roll", "Score", "Step Editor", "Smart Tempo"];
  return (
    <section aria-label="Editor" className="mr-[2px] ml-[1px] flex flex-col overflow-hidden rounded-[4px] border border-black bg-[#474747]">
      <div className="flex h-[29px] border-b border-black pl-[287px]">
        {tabs.map((t, i) => (
          <button key={t} className={`border-[#181818] pr-[4px] text-[13px] font-medium text-white ${i ? "w-[143px] border-r" : "w-36 border-x bg-[#606060]"}`}>{t}</button>
        ))}
      </div>
      <div className="flex h-[29px] items-center gap-2 border-b border-[#1a1a1a] px-2">
        <MenuGroup />
        <IconGroup items={[{ label: "Collapse", icon: <Svg w={16} h={14} sw={1.300}><path d="M0 7h16M5 1l3 3 3-3M5 13l3-3 3 3" /></Svg> }]} />
        <IconGroup items={[{ label: "Automation", icon: <Automation /> }]} />
        <IconGroup items={[
          { label: "MIDI in", icon: <><Angle /><Palette /></> },
          { label: "MIDI out", tone: "bg-[#358b3b]", icon: <><Palette /><Angle /></> },
        ]} />
        <IconGroup items={[{ label: "Catch playhead", icon: <Flex />, tone: "bg-[#2f68a8]" }]} />
        <IconGroup items={[{ label: "Link", tone: "bg-[#a5842c]", icon: <Svg w={20} h={14} sw={1.300}><path d="M9.500 9.800 6.800 12c-3.500 2.500-8-1.500-5-4.700L5 4.800c2.500-2 6.500 0 5.800 2.500M10.500 4.200l2.700-2.200c3.500-2.500 8 1.500 5 4.700L15 9.200c-2.500 2-6.500 0-5.800-2.500" /></Svg> }]} />
        <div className="flex-1" />
        <IconGroup items={[
          { label: "Pointer tool", w: "w-[42px]", icon: <span className="flex items-center gap-[10px]"><Arrow /><Chevron /></span> },
          { label: "Pencil tool", w: "w-[43px]", icon: <span className="flex items-center gap-2"><Svg w={13} h={13} sw={1.200}><path d="M.8.800 5 2l7 7.200c1 1.200-1.600 3.800-2.800 2.800L2 5z" /><path d="M5 2 2 5M.8.800l2 .7-1.300 1.300z" fill="currentColor" /></Svg><Chevron /></span> },
        ]} />
        <output className="flex h-[21px] w-[127px] items-center justify-center rounded-[4px] bg-[#3b3b3b] text-[13px] font-medium whitespace-pre text-[#b9b9b9]">C3   1 1 1 81</output>
        <Pick id="snap-editor" label="Snap:" value="Smart" width="w-[140px]" />
        <IconGroup items={[{ label: "Fit horizontally", icon: <HFit /> }]} />
        <ZoomGroup v={65} h={60} />
      </div>
      <div className="flex">
        <div className="flex w-[276px] shrink-0 flex-col border-r border-black">
          <div className="flex h-[45px] items-center border-b border-black bg-[#515151] pr-2 pl-2">
            <PianoPic w={26} h={31} />
            <div className="flex flex-1 flex-col items-center">
              <span className="text-[13px] leading-[17px] font-medium text-white">Grand Piano</span>
              <span className="text-[11px] leading-[13px] text-[#c0c0c0]">on Track Off 1</span>
            </div>
            <button aria-label="Editor options" className={darkBox + " mb-[2px] h-[21px] w-[33px] text-white " + cell}><Inspector /></button>
          </div>
          <div className="flex"><EditorSide /><Keyboard /></div>
        </div>
        <div className="relative flex min-w-0 flex-1 flex-col">
          <div className="flex h-[23px] overflow-hidden border-b border-black">
            <div className="w-[9px] shrink-0"><Svg w={9} h={16}><path d="M.5 1 8 8 .5 15z" fill="#555" stroke="#111" /></Svg></div>
            {["1", "1 3", "2", "2 3", "3", "3 3"].map((n, i) => (
              <div key={n} className="flex w-40 shrink-0 text-[13px] leading-[15px] font-medium text-[#c9c9c9]">
                {i % 2 === 0 && <span className="mt-[3px] mr-[3px] w-px bg-[#777]" />}{n}
              </div>
            ))}
          </div>
          <div className="flex h-[22px] border-b border-black bg-[#2d2d2d] pl-[9px]">
            <div className="flex flex-1 items-center gap-[7px] bg-[#bdf9c6] bg-[linear-gradient(to_right,#7fb587_1px,transparent_1px),linear-gradient(to_right,#7fb587_1px,transparent_1px),linear-gradient(to_right,#7fb587_1px,transparent_1px)] bg-repeat-x [background-position:0_17px,0_15px,0_0] [background-size:20px_4px,80px_6px,320px_21px] pb-[2px] pl-[6px] text-[11px] text-[#2f7d28]">
              <Svg w={15} h={11} sw={1.200}><path d="M.6.600h13.800v9.800H.6z" /><path d="m5 3 5 2.500L5 8z" fill="currentColor" stroke="none" /></Svg>
              Grand Piano
            </div>
          </div>
          <div className="relative h-[315px] overflow-hidden border-b border-[#2f7a2c]">
            {rows.map((r, i) => <div key={i} className={rowTone[r]} />)}
            <div className="pointer-events-none absolute inset-0 bg-[linear-gradient(to_right,rgba(255,255,255,0.13)_1px,transparent_1px),linear-gradient(to_right,rgba(255,255,255,0.06)_1px,transparent_1px),linear-gradient(to_right,rgba(255,255,255,0.07)_1px,transparent_1px)] [background-position:9px_0] [background-size:320px_100%,80px_100%,20px_100%]" />
            {notes.map(([x, y, w, line, color], i) => (
              <div key={i} style={{ left: x - 566, top: y - 582, width: w, backgroundColor: color }} className="absolute h-[17px] border border-black pt-[6px] pl-1">
                <div style={{ width: line }} className="h-[2px] bg-[#c8f0a8]" />
              </div>
            ))}
          </div>
          <Playhead top="top-[22px]" />
        </div>
      </div>
    </section>
  );
}

export default function App() {
  return (
    <div className="flex min-h-screen flex-col bg-[#1a2036] [font-family:Inter,'Liberation_Sans',sans-serif]">
      <MenuBar />
      <div className="flex flex-1 flex-col overflow-hidden rounded-[5px] bg-[#8e8e8e]">
        <ControlBar />
        <main className="flex flex-1 gap-[1px] pb-[2px] pl-[2px]">
          <InspectorPanel />
          <div className="flex min-w-0 flex-1 flex-col gap-[6px]">
            <TracksPanel />
            <EditorPanel />
          </div>
        </main>
      </div>
    </div>
  );
}
